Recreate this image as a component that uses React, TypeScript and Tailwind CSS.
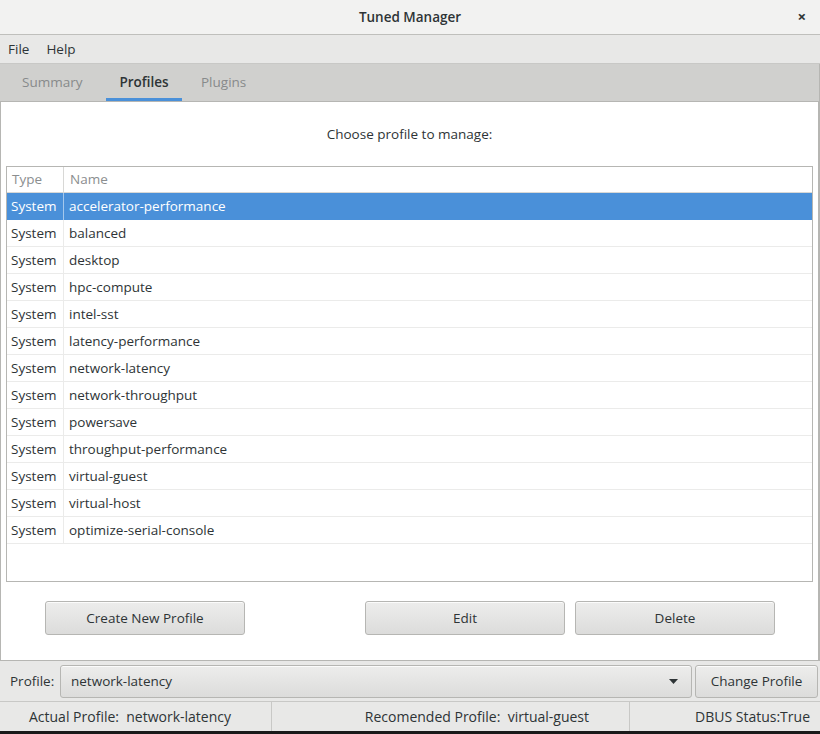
import React from "react";

const profiles = [
  "accelerator-performance",
  "balanced",
  "desktop",
  "hpc-compute",
  "intel-sst",
  "latency-performance",
  "network-latency",
  "network-throughput",
  "powersave",
  "throughput-performance",
  "virtual-guest",
  "virtual-host",
  "optimize-serial-console",
];

const btnBase =
  "flex items-center rounded-[3px] border border-[#b6b6b3] bg-gradient-to-b from-[#ededec] to-[#dcdcdb] text-[#2e3436] shadow-[inset_0_1px_0_rgba(255,255,255,0.8)]";
const btn = `${btnBase} justify-center`;

export default function App() {
  return (
    <div
      className="flex h-[734px] w-[820px] flex-col overflow-hidden bg-white text-[13.5px] text-[#2e3436]"
      style={{ fontFamily: '"Open Sans", "DejaVu Sans", sans-serif' }}
    >
      {/* Title bar */}
      <header className="relative flex h-[35px] shrink-0 items-center justify-center border-b border-[#bfbfbc] bg-[#f2f2f1]">
        <span className="font-semibold text-[#2e3436]">Tuned Manager</span>
        <span className="absolute right-[14px] top-[9px] text-[15px] font-bold leading-none text-[#2e3436]">
          ×
        </span>
      </header>

      {/* Menu bar */}
      <nav className="flex h-[29px] shrink-0 items-center gap-[17px] border-b border-[#c8c8c6] bg-[#e8e8e7] px-[8px] pt-[1px]">
        <span>File</span>
        <span>Help</span>
      </nav>

      {/* Tabs */}
      <div className="flex h-[38px] shrink-0 items-stretch border-b border-[#b6b6b3] bg-[#d0d0ce] pl-[6px]">
        <div className="flex w-[100px] items-center pl-[16px] text-[#878a8b]">Summary</div>
        <div className="flex w-[76px] items-center justify-center border-b-[3px] border-[#4a90d9] pt-[3px] font-semibold text-[#2e3436]">
          Profiles
        </div>
        <div className="flex items-center pl-[19px] text-[#878a8b]">Plugins</div>
        <div className="flex-1 border-r border-[#b6b6b3]" />
      </div>

      {/* Content */}
      <main className="flex flex-1 flex-col border-r-2 border-l border-[#b6b6b3] bg-white px-[5px]">
        <p className="flex h-[64px] items-center justify-center">Choose profile to manage:</p>
        <div className="flex h-[416px] flex-col border border-[#b6b6b3] bg-white">
          <div className="flex h-[26px] shrink-0 border-b border-[#d8d8d6] text-[#8b8e8f]">
            <div className="flex w-[57px] items-center border-r border-[#d8d8d6] px-[5px]">Type</div>
            <div className="flex items-center px-[6px]">Name</div>
          </div>
          {profiles.map((p, i) => (
            <div
              key={p}
              className={
                i === 0
                  ? "flex h-[27px] shrink-0 bg-[#4a90d9] text-white"
                  : "flex h-[27px] shrink-0 border-b border-[#ebebea]"
              }
            >
              <div
                className={
                  i === 0
                    ? "flex w-[57px] items-center border-r border-[#a5c8ec] px-[4px]"
                    : "flex w-[57px] items-center border-r border-[#ebebea] px-[4px]"
                }
              >
                System
              </div>
              <div className="flex items-center px-[5px]">{p}</div>
            </div>
          ))}
        </div>
        <div className="flex flex-1 items-start pl-[39px] pt-[19px]">
          <div className={`${btn} h-[34px] w-[200px]`}>Create New Profile</div>
          <div className={`${btn} ml-[120px] h-[34px] w-[200px]`}>Edit</div>
          <div className={`${btn} ml-[10px] h-[34px] w-[200px]`}>Delete</div>
        </div>
      </main>

      {/* Profile selector */}
      <div className="flex h-[41px] shrink-0 items-center border-t border-[#b6b6b3] bg-[#e8e8e7] pl-[10px] pr-[2px]">
        <span className="w-[50px]">Profile:</span>
        <div className={`${btnBase} h-[33px] w-[632px] justify-between pl-[10px] pr-[13px]`}>
          <span>network-latency</span>
          <svg width="9" height="5" viewBox="0 0 9 5">
            <path d="M0 0 L9 0 L4.5 5 Z" fill="#2e3436" />
          </svg>
        </div>
        <div className={`${btn} ml-[3px] h-[33px] flex-1`}>Change Profile</div>
      </div>

      {/* Status bar */}
      <footer className="flex h-[30px] shrink-0 items-center border-t border-[#c8c8c6] bg-[#e8e8e7] text-[14px]">
        <div className="flex h-full w-[272px] items-center justify-end border-r border-[#c8c8c6] pr-[40px]">
          Actual Profile:&nbsp; network-latency
        </div>
        <div className="flex h-full w-[358px] items-center justify-end border-r border-[#c8c8c6] pr-[40px]">
          Recomended Profile:&nbsp; virtual-guest
        </div>
        <div className="flex h-full flex-1 items-center justify-end pr-[10px]">DBUS Status:True</div>
      </footer>
      <div className="h-[3px] shrink-0 bg-[#1a1a1a]" />
    </div>
  );
}
